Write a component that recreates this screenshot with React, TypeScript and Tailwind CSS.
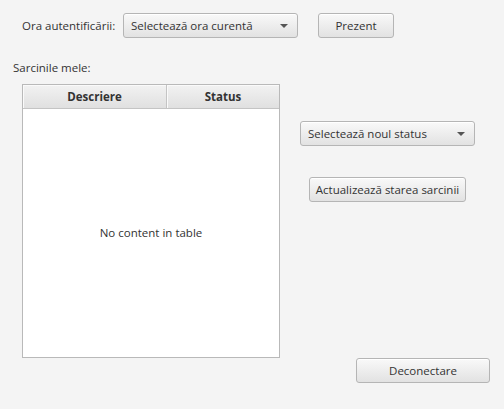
const btn =
  'flex h-[25px] items-center rounded-[3px] border border-[#b5b5b5] bg-gradient-to-b from-[#f9f9f9] to-[#e2e2e2] text-[#333] shadow-[inset_0_1px_0_#ffffff]'

function Combo({ label, width }: { label: string; width: string }) {
  return (
    <div className={`${btn} ${width} justify-between pl-[7px] pr-[9px]`}>
      <span>{label}</span>
      <svg width="8" height="4" viewBox="0 0 8 4">
        <path d="M0 0 H8 L4 4 Z" fill="#555" />
      </svg>
    </div>
  )
}

export default function App() {
  return (
    <div className="relative h-[409px] w-[504px] bg-[#f4f4f4] font-['Open_Sans','Noto_Sans',sans-serif] text-[11.5px] text-[#333]">
      <div className="flex items-center pt-[13px] pl-[22px]">
        <span className="w-[101px]">Ora autentificării:</span>
        <Combo label="Selectează ora curentă" width="w-[175px]" />
        <div className={`${btn} ml-[20px] w-[76px] justify-center`}>Prezent</div>
      </div>

      <div className="mt-[22px] pl-[13px] leading-[16px]">Sarcinile mele:</div>

      <div className="mt-[8px] flex items-start">
        <div className="ml-[22px] flex h-[274px] w-[258px] flex-col border border-[#b9b9b9] bg-white">
          <div className="flex h-[24px] border-b border-[#c4c4c4] bg-gradient-to-b from-[#f2f2f2] to-[#e0e0e0] font-bold">
            <div className="flex w-[144px] items-center justify-center border-r border-[#c4c4c4] shadow-[inset_1px_1px_0_#fafafa]">
              Descriere
            </div>
            <div className="flex flex-1 items-center justify-center shadow-[inset_1px_1px_0_#fafafa]">Status</div>
          </div>
          <div className="flex flex-1 items-center justify-center">No content in table</div>
        </div>

        <div className="ml-[20px] flex h-[299px] flex-col items-start">
          <div className="mt-[37px]">
            <Combo label="Selectează noul status" width="w-[175px]" />
          </div>
          <div className={`${btn} mt-[31px] ml-[9px] w-[157px] justify-center`}>Actualizează starea sarcinii</div>
          <div className={`${btn} mt-auto ml-[56px] w-[134px] justify-center`}>Deconectare</div>
        </div>
      </div>
    </div>
  )
}
